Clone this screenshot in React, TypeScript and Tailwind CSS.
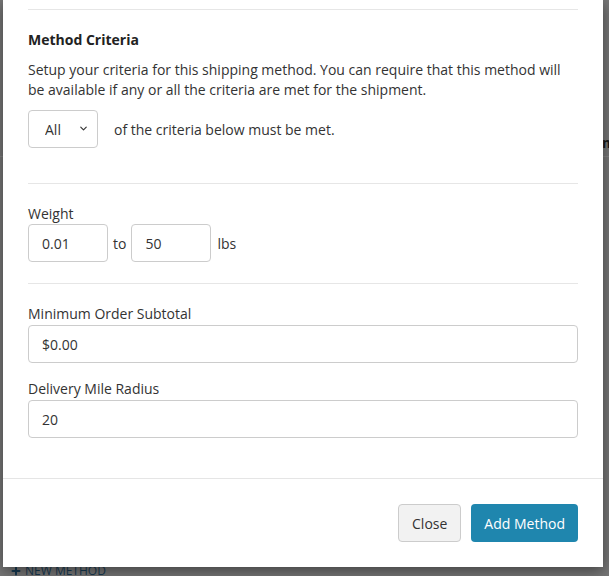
import { ChevronDown, Plus } from "lucide-react";

const inputCls =
  "h-[38px] rounded-[4px] border border-[#cccccc] bg-white px-[13px] text-[14px] text-[#333] outline-none";

function Field({ label, value }: { label: string; value: string }) {
  return (
    <div>
      <label className="block h-[22px] leading-[22px]">{label}</label>
      <input className={`${inputCls} w-full`} defaultValue={value} />
    </div>
  );
}

export default function App() {
  return (
    <div
      className="relative h-[576px] w-full overflow-hidden bg-[#777777] text-[14px] text-[#333]"
      style={{ fontFamily: '"Open Sans", "Noto Sans", sans-serif' }}
    >
      {/* page behind the overlay */}
      <div className="absolute left-0 right-0 top-[156px] h-px bg-[#858585]" />
      <div className="absolute left-[602px] top-[136px] text-[14px] font-bold leading-none text-[#1a1a1a]">m</div>
      <div className="absolute left-[10px] top-[565px] flex items-center gap-[3px] text-[12px] leading-none text-[#173a52]">
        <Plus size={12} strokeWidth={4} />
        <span>NEW METHOD</span>
      </div>

      <div className="relative ml-[3px] w-[600px] bg-white shadow-[0_4px_14px_rgba(0,0,0,0.45)]">
        <div className="px-[25px] pb-[40px] pt-[9px]">
          <div className="border-t border-[#e6e6e6]" />
          <h3 className="mt-[20px] h-[20px] font-bold leading-[20px] text-[#222]">Method Criteria</h3>
          <p className="mt-[10px] leading-[20px]">
            Setup your criteria for this shipping method. You can require that this method will be available if any
            or all the criteria are met for the shipment.
          </p>
          <div className="mt-[10px] flex items-center">
            <div className="relative">
              <select className="h-[38px] w-[70px] appearance-none rounded-[4px] border border-[#cccccc] bg-white pl-[16px] text-[14px] text-[#333] outline-none">
                <option>All</option>
                <option>Any</option>
              </select>
              <ChevronDown
                size={11}
                strokeWidth={2.5}
                className="pointer-events-none absolute right-[9px] top-[13px] text-[#333]"
              />
            </div>
            <span className="ml-[16px]">of the criteria below must be met.</span>
          </div>

          <div className="mt-[35px] border-t border-[#e6e6e6]" />
          <div className="mt-[20px]">
            <label className="block h-[20px] leading-[20px]">Weight</label>
            <div className="flex items-center">
              <input className={`${inputCls} w-[80px]`} defaultValue="0.01" />
              <span className="mx-[5px]">to</span>
              <input className={`${inputCls} w-[80px]`} defaultValue="50" />
              <span className="ml-[6px]">lbs</span>
            </div>
          </div>

          <div className="mt-[21px] border-t border-[#e6e6e6]" />
          <div className="mt-[19px] flex flex-col gap-[15px]">
            <Field label="Minimum Order Subtotal" value="$0.00" />
            <Field label="Delivery Mile Radius" value="20" />
          </div>
        </div>

        <div className="flex justify-end gap-[10px] border-t border-[#e5e5e5] px-[25px] pb-[25px] pt-[25px]">
          <button
            type="button"
            className="h-[38px] rounded-[4px] border border-[#cccccc] bg-[#f2f2f2] px-[13px] text-[14px] text-[#333]"
          >
            Close
          </button>
          <button
            type="button"
            className="h-[38px] rounded-[4px] bg-[#1f86ae] px-[13px] text-[14px] text-white"
          >
            Add Method
          </button>
        </div>
      </div>
    </div>
  );
}
